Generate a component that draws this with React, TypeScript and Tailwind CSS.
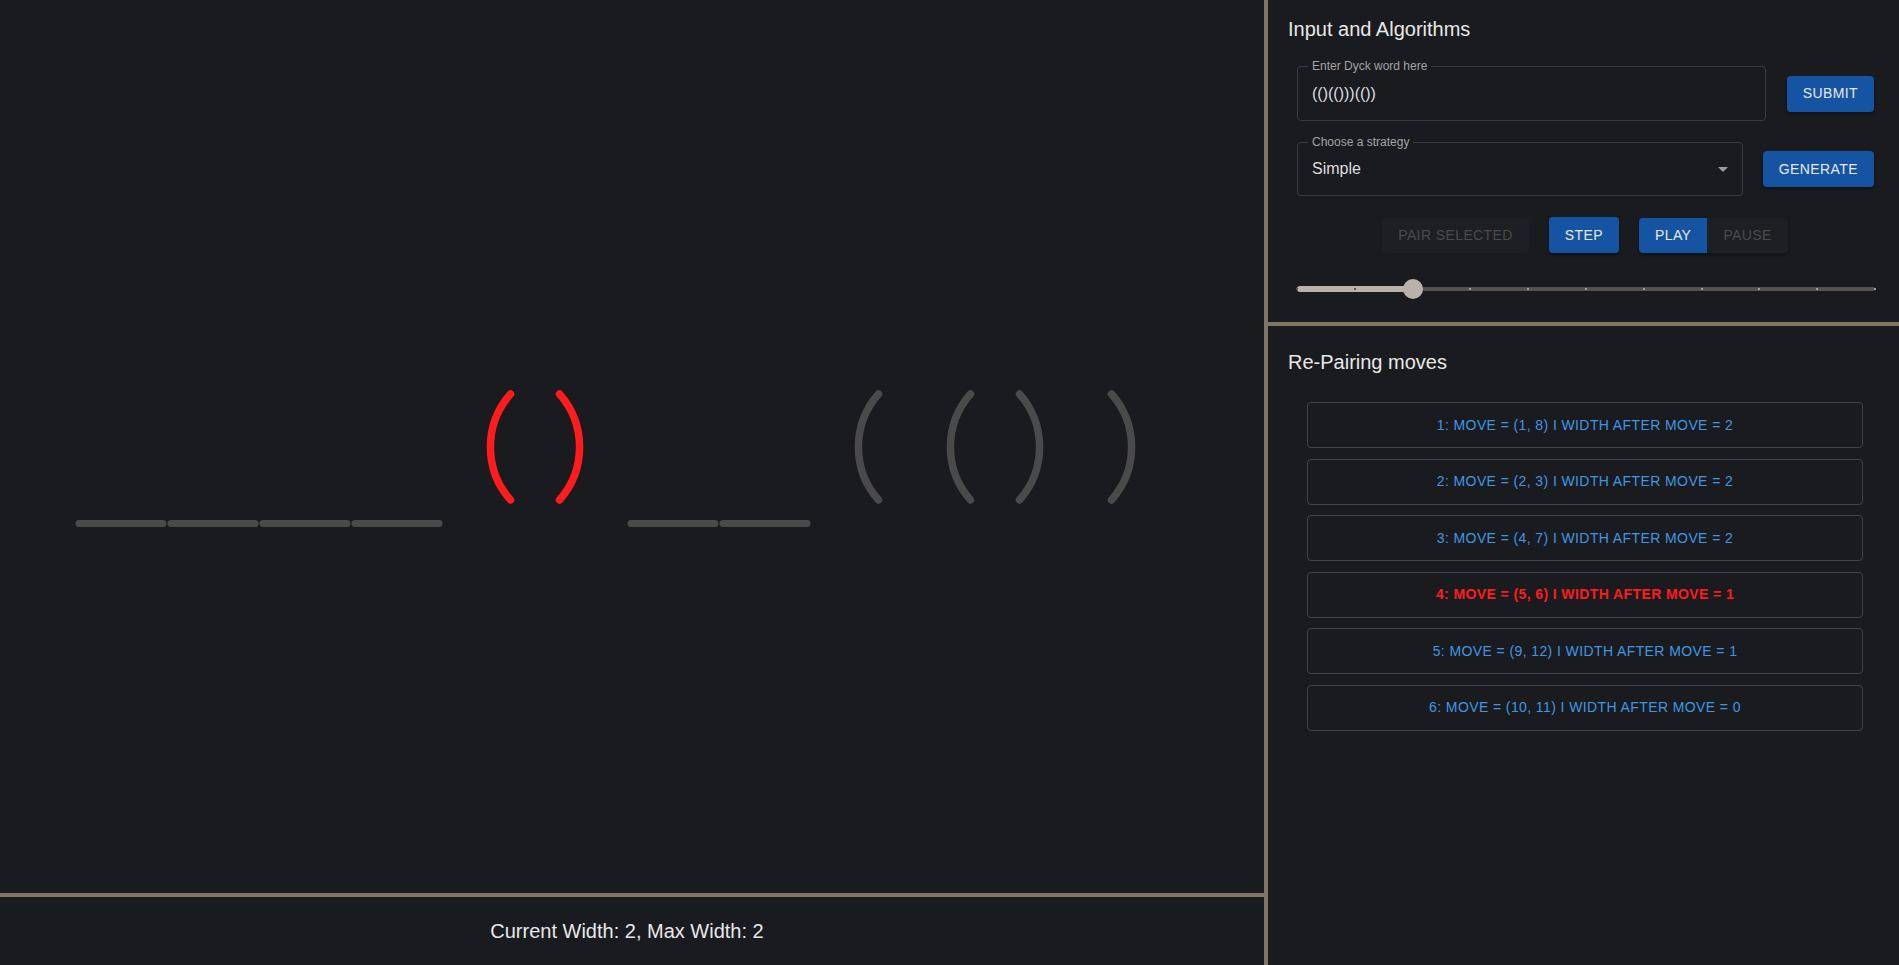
import { useState } from "react"

const WORD = "(()(()))(())"
const REMOVED = [1, 2, 3, 4, 7, 8]
const CURRENT = [5, 6]

const MOVES = [
    { id: 1, pair: "(1, 8)", width: 2 },
    { id: 2, pair: "(2, 3)", width: 2 },
    { id: 3, pair: "(4, 7)", width: 2 },
    { id: 4, pair: "(5, 6)", width: 1 },
    { id: 5, pair: "(9, 12)", width: 1 },
    { id: 6, pair: "(10, 11)", width: 0 },
]

const Slot = ({ ch, state }: { ch: string; state: "gone" | "current" | "idle" }) => {
    const color = state === "current" ? "#ff1c1c" : "#4a4a4a"
    return (
        <svg width="92" height="140" viewBox="0 0 92 140" className="shrink-0">
            {state === "gone" ? (
                <line x1="4" y1="135.5" x2="88" y2="135.5" stroke="#4a4a4a" strokeWidth="7" strokeLinecap="round" />
            ) : (
                <path
                    d={ch === "(" ? "M67.5 6 A80 80 0 0 0 67.5 112" : "M24.5 6 A80 80 0 0 1 24.5 112"}
                    stroke={color}
                    strokeWidth="7.5"
                    strokeLinecap="round"
                    fill="none"
                />
            )}
        </svg>
    )
}

const OutlinedBox = ({ label, className, children }: { label: string; className: string; children: React.ReactNode }) => (
    <div className={`relative flex items-center rounded-[4px] border border-[#3a3b3d] pl-[14px] ${className}`}>
        <span className="absolute -top-[7px] left-[10px] bg-[#1a1b1e] px-[4px] text-[12px] leading-[12px] text-[#a3a3a3]">{label}</span>
        {children}
    </div>
)

const BlueButton = ({ children, className = "" }: { children: React.ReactNode; className?: string }) => (
    <button className={`h-[36px] rounded-[4px] bg-[#1554a2] px-4 text-[14px] font-medium uppercase tracking-[0.4px] text-[#e8e8e8] shadow-[0_2px_3px_rgba(0,0,0,0.35)] ${className}`}>
        {children}
    </button>
)

const App = () => {
    const [value] = useState(2)
    const marks = [0, 1, 2, 3, 4, 5, 6, 7, 8, 9, 10]
    const pct = value * 10

    return (
        <div className="grid h-screen w-full grid-cols-[1264px_4px_1fr] overflow-hidden bg-[#1a1b1e] font-['Liberation_Sans',Arial,sans-serif]">
            {/* left: visualisation */}
            <div className="flex flex-col">
                <div className="flex h-[893px] pl-[75px] pt-[388px]">
                    {WORD.split("").map((ch, i) => {
                        const pos = i + 1
                        const state = REMOVED.includes(pos) ? "gone" : CURRENT.includes(pos) ? "current" : "idle"
                        return <Slot key={i} ch={ch} state={state} />
                    })}
                </div>
                <div className="h-[4px] bg-[#7e7565]" />
                <div className="flex flex-1 items-center justify-center pb-[1px] pr-[10px] text-[20px] text-[#e8e8e8]">
                    Current Width: 2, Max Width: 2
                </div>
            </div>

            <div className="bg-[#7e7565]" />

            {/* right: controls */}
            <div className="flex flex-col">
                <div className="flex h-[322px] flex-col">
                    <h2 className="pl-[20px] pt-[13px] text-[20px] leading-[32px] text-[#e8e8e8]">Input and Algorithms</h2>

                    <div className="mt-[21px] flex items-center pl-[29px] pr-[25px]">
                        <OutlinedBox label="Enter Dyck word here" className="h-[55px] w-[469px]">
                            <span className="text-[16px] text-[#dedede]">{WORD}</span>
                        </OutlinedBox>
                        <BlueButton className="ml-auto">Submit</BlueButton>
                    </div>

                    <div className="mt-[21px] flex items-center pl-[29px] pr-[25px]">
                        <OutlinedBox label="Choose a strategy" className="h-[54px] w-[446px]">
                            <span className="text-[16px] text-[#dedede]">Simple</span>
                            <span className="ml-auto mr-[14px] h-0 w-0 border-x-[5px] border-t-[5px] border-x-transparent border-t-[#9a9a9a]" />
                        </OutlinedBox>
                        <BlueButton className="ml-auto">Generate</BlueButton>
                    </div>

                    <div className="mt-[21px] flex items-center justify-center gap-5 pl-[3px]">
                        <button className="h-[35px] rounded-[4px] bg-[#1e1f22] px-4 text-[14px] uppercase tracking-[0.4px] text-[#4b4b4c]">
                            Pair selected
                        </button>
                        <BlueButton className="h-[35px]">Step</BlueButton>
                        <div className="flex h-[35px] overflow-hidden rounded-[4px] shadow-[0_2px_3px_rgba(0,0,0,0.35)]">
                            <button className="bg-[#1554a2] px-4 text-[14px] uppercase tracking-[0.4px] text-[#e8e8e8]">Play</button>
                            <button className="bg-[#1e1f22] px-4 text-[14px] uppercase tracking-[0.4px] text-[#4b4b4c]">Pause</button>
                        </div>
                    </div>

                    <div className="mt-[26px] pl-[29px] pr-[24px]">
                        <div className="relative h-[20px]">
                            <div className="absolute left-0 right-0 top-[8px] h-[4px] rounded-full bg-[#55524e]" />
                            <div className="absolute left-0 top-[7px] h-[6px] rounded-full bg-[#bab3a9]" style={{ width: `${pct}%` }} />
                            {marks.map((m) => (
                                <span
                                    key={m}
                                    className={`absolute top-[9px] h-[2px] w-[2px] -translate-x-1/2 ${m <= value ? "bg-[#5a5650]" : "bg-[#a39c92]"}`}
                                    style={{ left: `${m * 10}%` }}
                                />
                            ))}
                            <span className="absolute top-0 h-[20px] w-[20px] -translate-x-1/2 rounded-full bg-[#bab2a8]" style={{ left: `${pct}%` }} />
                        </div>
                    </div>
                </div>

                <div className="h-[4px] bg-[#7e7565]" />

                <div className="flex flex-1 flex-col">
                    <h2 className="pl-[20px] pt-[20px] text-[20px] leading-[32px] text-[#e8e8e8]">Re-Pairing moves</h2>
                    <div className="ml-[39px] mr-[36px] mt-[24px] flex flex-col gap-[10.6px]">
                        {MOVES.map((m) => (
                            <div
                                key={m.id}
                                className={`flex h-[46px] items-center justify-center rounded-[4px] border border-[#414446] text-[14px] uppercase tracking-[0.4px] ${
                                    m.id === 4 ? "font-semibold text-[#ff1c1c]" : "text-[#3f97e4]"
                                }`}
                            >
                                {m.id}: Move = {m.pair} I Width after move = {m.width}
                            </div>
                        ))}
                    </div>
                </div>
            </div>
        </div>
    )
}

export default App
